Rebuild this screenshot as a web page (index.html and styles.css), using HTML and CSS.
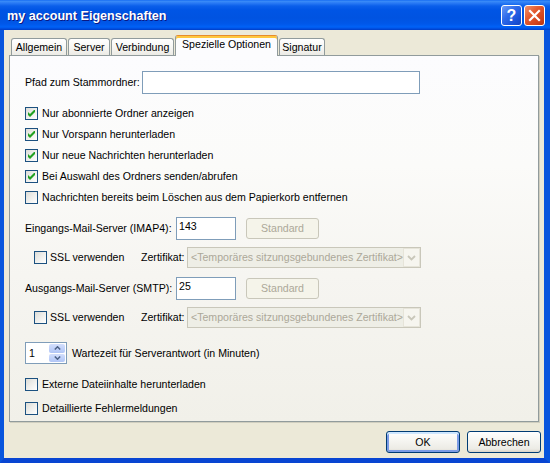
FILE: index.html
```html
<!DOCTYPE html>
<html lang="de">
<head>
<meta charset="utf-8">
<title>my account Eigenschaften</title>
<link rel="stylesheet" href="styles.css">
</head>
<body>
<div class="window">
  <div class="titlebar">
    <span class="title">my account Eigenschaften</span>
    <div class="caption-buttons">
      <span class="cap-btn help">?</span>
      <span class="cap-btn close"><svg width="19" height="19" viewBox="0 0 19 19"><path d="M5 5L14 14M14 5L5 14" stroke="#fff" stroke-width="2.2" stroke-linecap="square"/></svg></span>
    </div>
  </div>
  <div class="frame">
    <div class="client">
      <div class="tabs">
        <div class="tab w-allg">Allgemein</div>
        <div class="tab w-server">Server</div>
        <div class="tab w-verb">Verbindung</div>
        <div class="tab active w-spez">Spezielle Optionen</div>
        <div class="tab w-sig">Signatur</div>
      </div>
      <div class="panel">
        <div class="path-row">
          <span class="path-label">Pfad zum Stammordner:</span>
          <span class="textbox path-input"></span>
        </div>
        <div class="checks">
          <div class="check"><span class="cb"><svg width="11" height="11" viewBox="0 0 11 11"><polygon points="2,4 4,6 8,2 9,2 9,4 4,9 2,7" fill="#21A121"/></svg></span><span>Nur abonnierte Ordner anzeigen</span></div>
          <div class="check"><span class="cb"><svg width="11" height="11" viewBox="0 0 11 11"><polygon points="2,4 4,6 8,2 9,2 9,4 4,9 2,7" fill="#21A121"/></svg></span><span>Nur Vorspann herunterladen</span></div>
          <div class="check"><span class="cb"><svg width="11" height="11" viewBox="0 0 11 11"><polygon points="2,4 4,6 8,2 9,2 9,4 4,9 2,7" fill="#21A121"/></svg></span><span>Nur neue Nachrichten herunterladen</span></div>
          <div class="check"><span class="cb"><svg width="11" height="11" viewBox="0 0 11 11"><polygon points="2,4 4,6 8,2 9,2 9,4 4,9 2,7" fill="#21A121"/></svg></span><span>Bei Auswahl des Ordners senden/abrufen</span></div>
          <div class="check"><span class="cb"></span><span>Nachrichten bereits beim Löschen aus dem Papierkorb entfernen</span></div>
        </div>

        <div class="server-row">
          <span class="server-label">Eingangs-Mail-Server (IMAP4):</span>
          <span class="textbox port">143</span>
          <span class="btn-disabled">Standard</span>
        </div>
        <div class="ssl-row">
          <span class="cb"></span>
          <span class="ssl-label">SSL verwenden</span>
          <span class="cert-label">Zertifikat:</span>
          <span class="combo">
            <span class="combo-text">&lt;Temporäres sitzungsgebundenes Zertifikat&gt;</span>
            <span class="combo-arrow"><svg width="9" height="6" viewBox="0 0 9 6"><path d="M1 1L4.5 4.5L8 1" fill="none" stroke="#C9C7BA" stroke-width="1.8"/></svg></span>
          </span>
        </div>

        <div class="server-row">
          <span class="server-label">Ausgangs-Mail-Server (SMTP):</span>
          <span class="textbox port">25</span>
          <span class="btn-disabled">Standard</span>
        </div>
        <div class="ssl-row">
          <span class="cb"></span>
          <span class="ssl-label">SSL verwenden</span>
          <span class="cert-label">Zertifikat:</span>
          <span class="combo">
            <span class="combo-text">&lt;Temporäres sitzungsgebundenes Zertifikat&gt;</span>
            <span class="combo-arrow"><svg width="9" height="6" viewBox="0 0 9 6"><path d="M1 1L4.5 4.5L8 1" fill="none" stroke="#C9C7BA" stroke-width="1.8"/></svg></span>
          </span>
        </div>

        <div class="spin-row">
          <span class="spinner">
            <span class="spin-value">1</span>
            <span class="spin-btns">
              <span class="spin-btn"><svg width="7" height="4" viewBox="0 0 7 4"><path d="M0.8 3.5L3.5 0.8L6.2 3.5" fill="none" stroke="#4D6185" stroke-width="1.5"/></svg></span>
              <span class="spin-btn"><svg width="7" height="4" viewBox="0 0 7 4"><path d="M0.8 0.5L3.5 3.2L6.2 0.5" fill="none" stroke="#4D6185" stroke-width="1.5"/></svg></span>
            </span>
          </span>
          <span class="spin-label">Wartezeit für Serverantwort (in Minuten)</span>
        </div>

        <div class="bottom-checks">
          <div class="check tall"><span class="cb"></span><span>Externe Dateiinhalte herunterladen</span></div>
          <div class="check tall"><span class="cb"></span><span>Detaillierte Fehlermeldungen</span></div>
        </div>
      </div>
      <div class="footer">
        <span class="btn default">OK</span>
        <span class="btn">Abbrechen</span>
      </div>
    </div>
  </div>
</div>
</body>
</html>
```

FILE: styles.css
```css
* { box-sizing: border-box; }
html, body { margin: 0; padding: 0; }
body {
  width: 550px;
  height: 463px;
  overflow: hidden;
  background: #fff;
  font-family: "Liberation Sans", Arial, sans-serif;
  font-size: 10.6px;
  line-height: 13px;
  color: #000;
}
.window {
  width: 550px;
  height: 463px;
  display: flex;
  flex-direction: column;
}
.titlebar {
  height: 30px;
  flex: none;
  display: flex;
  align-items: center;
  padding: 0 5px 0 7px;
  color: #fff;
  background: linear-gradient(to bottom, #0A60F0 0px, #3C8EF8 1px, #2A7BF5 3px, #0B5FEA 6px, #0055E5 10px, #0053E1 18px, #0058EA 24px, #0062F7 27px, #004ADB 29px, #003DC4 30px);
}
.title {
  flex: 1;
  font-weight: bold;
  font-size: 12.6px;
  line-height: 16px;
  text-shadow: 1px 1px 0 #0A1883;
  padding-top: 1px;
  white-space: nowrap;
}
.caption-buttons { display: flex; gap: 2px; padding-top: 1px; }
.cap-btn {
  width: 21px;
  height: 21px;
  border: 1px solid #fff;
  border-radius: 3px;
  display: flex;
  align-items: center;
  justify-content: center;
  color: #fff;
}
.help {
  background: linear-gradient(135deg, #6C9BF7 0%, #2E6BEA 40%, #1A52D8 75%, #1443BE 100%);
  font-weight: bold;
  font-size: 16px;
  line-height: 19px;
}
.close {
  background: linear-gradient(135deg, #F0926C 0%, #E3592F 40%, #D2431C 75%, #B83412 100%);
}
.frame {
  flex: 1;
  display: flex;
  border-left: 4px solid #0855DD;
  border-right: 6px solid #0855DD;
  border-bottom: 5px solid #0845D2;
}
.client {
  flex: 1;
  background: #ECE9D8;
  display: flex;
  flex-direction: column;
}

/* tabs */
.tabs {
  display: flex;
  align-items: flex-end;
  height: 25px;
  padding: 5px 0 0 7px;
  gap: 1px;
  flex: none;
}
.tab {
  height: 17px;
  border: 1px solid #919B9C;
  border-bottom: 0;
  border-radius: 3px 3px 0 0;
  background: linear-gradient(to bottom, #FFFFFF 0%, #F7F7F4 50%, #ECEBE5 100%);
  display: flex;
  justify-content: center;
  align-items: flex-start;
  padding-top: 2px;
  white-space: nowrap;
}
.tab.active {
  height: 21px;
  margin-bottom: -1px;
  background: #FCFCFE;
  border-top: 1px solid #E68B2C;
  box-shadow: inset 0 2px 0 #FFC73C;
  position: relative;
  z-index: 1;
}
.w-allg { width: 56px; }
.w-server { width: 42px; }
.w-verb { width: 63px; }
.w-spez { width: 103px; }
.w-sig { width: 46px; }

/* panel */
.panel {
  margin: 0 5px;
  height: 367px;
  flex: none;
  border: 1px solid #919B9C;
  box-shadow: 1px 1px 0 #D0CEBF;
  background: linear-gradient(to bottom, #FCFCFE 0%, #FBFBF9 30%, #F6F5F1 60%, #F1F0E9 100%);
  padding: 15px 0 0 15px;
}
.textbox {
  display: block;
  border: 1px solid #7F9DB9;
  background: #fff;
  height: 23px;
  padding: 2px 2px 0 2px;
}
.path-row { display: flex; align-items: center; height: 23px; }
.path-label { width: 117px; flex: none; white-space: nowrap; }
.path-input { width: 278px; }

.checks { margin-top: 9px; }
.check {
  display: flex;
  align-items: center;
  gap: 4px;
  height: 21px;
  white-space: nowrap;
}
.check.tall { height: 24px; }
.cb {
  width: 13px;
  height: 13px;
  flex: none;
  border: 1px solid #1C5180;
  background: linear-gradient(135deg, #DCDCD7 0%, #EDEDEA 45%, #FFFFFF 100%);
  display: block;
}
.cb svg { display: block; }

.server-row { display: flex; align-items: center; height: 23px; margin-top: 9px; }
.server-label { width: 151px; flex: none; white-space: nowrap; }
.port { width: 60px; }
.btn-disabled {
  width: 73px;
  height: 21px;
  margin-left: 10px;
  border: 1px solid #C9C7BA;
  border-radius: 3px;
  background: #F5F4EA;
  color: #ACA899;
  display: flex;
  align-items: center;
  justify-content: center;
}

.ssl-row {
  display: flex;
  align-items: center;
  height: 21px;
  margin-top: 7px;
  padding-left: 9px;
  white-space: nowrap;
}
.ssl-label { width: 91px; margin-left: 3px; flex: none; }
.cert-label { width: 46px; flex: none; }
.combo {
  width: 234px;
  height: 21px;
  border: 1px solid #C9C7BA;
  background: #EEEEE6;
  display: flex;
  align-items: stretch;
}
.combo-text {
  flex: 1;
  overflow: hidden;
  white-space: nowrap;
  color: #ACA899;
  padding-left: 3px;
  line-height: 19px;
}
.combo-arrow {
  width: 17px;
  flex: none;
  border: 1px solid #E6E4D9;
  background: #F6F5EF;
  display: flex;
  align-items: center;
  justify-content: center;
}
.combo-arrow svg { display: block; }

.spin-row { display: flex; align-items: center; height: 22px; margin-top: 14px; }
.spinner {
  width: 42px;
  height: 22px;
  border: 1px solid #7F9DB9;
  background: #fff;
  display: flex;
  padding: 1px;
}
.spin-value { flex: 1; padding: 3px 0 0 2px; }
.spin-btns { width: 16px; display: flex; flex-direction: column; gap: 1px; }
.spin-btn {
  flex: 1;
  border-radius: 2px;
  background: linear-gradient(to bottom, #D3DEFB 0%, #C1D2FA 50%, #B1C5F5 100%);
  display: flex;
  align-items: center;
  justify-content: center;
}
.spin-btn svg { display: block; }
.spin-label { margin-left: 5px; white-space: nowrap; }

.bottom-checks { margin-top: 8px; }

/* footer */
.footer {
  display: flex;
  justify-content: flex-end;
  gap: 7px;
  margin-top: 9px;
  padding-right: 3px;
}
.btn {
  width: 74px;
  height: 22px;
  border: 1px solid #003C74;
  border-radius: 3px;
  background: linear-gradient(to bottom, #FFFFFF 0%, #F6F6F2 40%, #ECEBE5 85%, #D8D3C8 100%);
  display: flex;
  align-items: center;
  justify-content: center;
}
.btn.default {
  box-shadow: inset 0 2px 0 #CEE7FF, inset 0 0 0 2px #7C9CE6;
}
```
